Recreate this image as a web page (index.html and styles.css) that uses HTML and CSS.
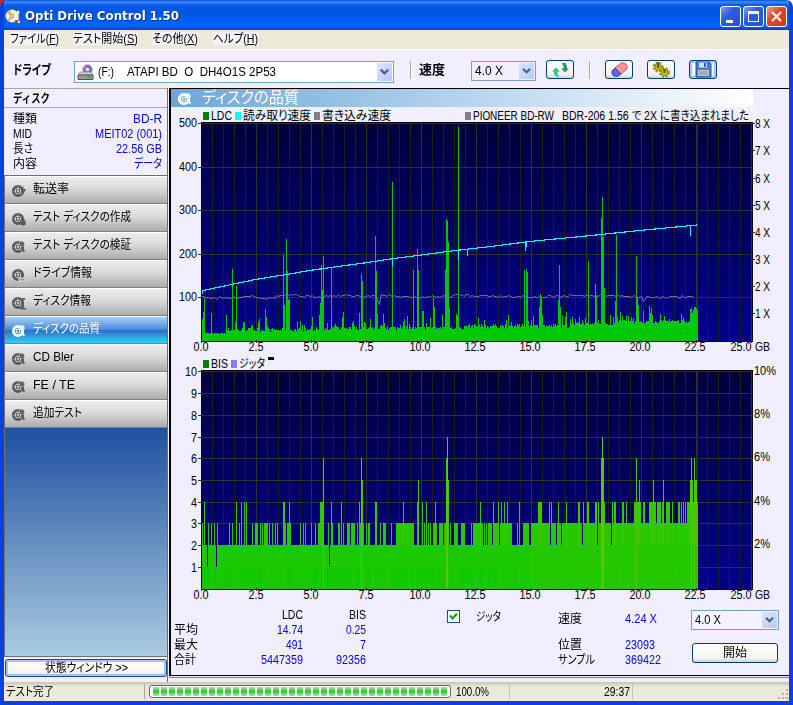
FILE: index.html
```html
<!DOCTYPE html>
<html lang="ja">
<head>
<meta charset="utf-8">
<title>Opti Drive Control 1.50</title>
<link rel="stylesheet" href="styles.css">
</head>
<body>
<svg class="defs" width="0" height="0" aria-hidden="true">
  <defs>
    <symbol id="disc" viewBox="0 0 16 16">
      <circle cx="7" cy="8" r="4.6" fill="none" stroke="currentColor" stroke-width="3"/>
      <circle cx="7" cy="8" r="1.7" fill="none" stroke="currentColor" stroke-width="1.1"/>
      <path d="M2 8h3M7 3v3M9 10l2 2" stroke="#fff" stroke-opacity=".35"/>
    </symbol>
    <symbol id="mag" viewBox="0 0 16 16">
      <use href="#disc"/>
      <circle cx="11" cy="5" r="2.4" fill="currentColor" fill-opacity=".6" stroke="#ddd" stroke-opacity=".8"/>
      <circle cx="11" cy="5" r="2" fill="none" stroke="currentColor"/>
      <path d="M11.500 8.500l1.500 4.500" stroke="currentColor" stroke-width="2"/>
    </symbol>
    <symbol id="chev" viewBox="0 0 16 18"><path d="M4 6.5l4 4 4-4" fill="none" stroke="#4d6185" stroke-width="2.4"/></symbol>
  </defs>
</svg>
<div class="window">
  <header class="titlebar">
    <svg class="app-icon" width="16" height="16" viewBox="0 0 16 16"><circle cx="7" cy="8" r="6.5" fill="#f3ecd0"/><path d="M2 5l5 3-2-6zM2 12l5-4-3 6z" fill="#d8b75c"/><circle cx="7" cy="8" r="2.2" fill="#b8a060"/><circle cx="7" cy="8" r="1" fill="#fff"/><path d="M10 6l3-4 2 3v10h-5z" fill="#fff"/><path d="M13.500 5h1.500v8h-1.500z" fill="#a8452c"/><path d="M10 12h3v3h-3z" fill="#666"/></svg>
    <span class="app-title" data-w="154">Opti Drive Control 1.50</span>
    <div class="win-buttons">
      <span class="wb"><svg width="19" height="19"><path d="M5 13h7v3H5z" fill="#fff"/></svg></span>
      <span class="wb"><svg width="19" height="19"><path d="M4 4h11v11H4zM5 7v7h9V7z" fill="#fff" fill-rule="evenodd"/></svg></span>
      <span class="wb close"><svg width="19" height="19"><path d="M5 5l9 9M14 5l-9 9" stroke="#fff" stroke-width="2.2"/></svg></span>
    </div>
  </header>
  <nav class="menubar">
    <span class="mi mi1"><span data-w="49">ファイル(<u>F</u>)</span></span>
    <span class="mi mi2"><span data-w="65">テスト開始(<u>S</u>)</span></span>
    <span class="mi mi3"><span data-w="46">その他(<u>X</u>)</span></span>
    <span class="mi mi4"><span data-w="45">ヘルプ(<u>H</u>)</span></span>
  </nav>
  <section class="toolbar">
    <div class="tb-label"><b data-w="38">ドライブ</b></div>
    <div class="combo drive">
      <svg width="17" height="17" viewBox="0 0 17 17"><circle cx="10.500" cy="5.500" r="5" fill="#8374ad"/><circle cx="10.500" cy="5.500" r="1.700" fill="#e8e2f6"/><path d="M10 5l-4-3" stroke="#d3c9ec"/><path d="M3 8h11l2 3H1z" fill="#ccc" stroke="#888" stroke-width=".7"/><path d="M1 11h15v4.500H1z" fill="#999" stroke="#555"/><path d="M10 13h4" stroke="#2b4" stroke-width="2"/></svg>
      <span data-w="16">(F:)</span><span class="model" data-w="149">ATAPI BD&nbsp; O&nbsp; DH4O1S 2P53</span>
      <svg class="drop" width="15" height="18"><use href="#chev"/></svg>
    </div>
    <i class="vsep"></i>
    <div class="tb-label speed"><b data-w="26">速度</b></div>
    <div class="combo spd"><span data-w="28">4.0 X</span><svg class="drop" width="15" height="16"><use href="#chev"/></svg></div>
    <span class="tbtn refresh"><svg width="26" height="17"><path d="M5 10.500l4-4 4 4h-2.500V13l2 2.500H9L7 13v-2.500z" fill="#35c282"/><path d="M22 7.500l-4 4-4-4h2.500V5l-2-3h4L20 5v2.500z" fill="#2a9a63"/></svg></span>
    <i class="vsep second"></i>
    <span class="tbtn erase"><svg width="26" height="17"><path d="M9 7l6-5q3-1 5 1t1 5l-6 5z" fill="#ff9292" stroke="#c86464"/><path d="M9 7l6 6q-3 3.500-7 2-3-2-2-5z" fill="#6262f4" stroke="#3b3ba8"/></svg></span>
    <span class="tbtn gears"><svg width="26" height="17"><g fill="none" stroke="#a69b00" stroke-width="2.500" stroke-dasharray="2 1.500"><circle cx="10" cy="6" r="4.300"/><circle cx="16.500" cy="11.500" r="4.300"/></g><g fill="#cbc000" stroke="#8a8000"><circle cx="10" cy="6" r="3.400"/><circle cx="16.500" cy="11.500" r="3.400"/></g><path d="M10 1v6M16.500 8v4" stroke="#555" stroke-width="2"/></svg></span>
    <span class="tbtn save"><svg width="26" height="17"><path d="M6 1h13l2 2v13H6z" fill="#3f7fe0" stroke="#1d4faa"/><path d="M9 1.500h8v5H9z" fill="#d6e4fb"/><path d="M14 2h2v4h-2z" fill="#2a5fbf"/><path d="M8 9h11v6H8z" fill="#c8c8c8"/><path d="M9 11h9M9 13h9" stroke="#888"/></svg></span>
  </section>
  <main class="main">
    <aside class="side">
      <h2 class="side-head"><span data-w="37">ディスク</span></h2>
      <dl class="info">
        <div><dt data-w="24">種類</dt><dd data-w="29">BD-R</dd></div>
        <div><dt data-w="19">MID</dt><dd class="mid" data-w="67">MEIT02 (001)</dd></div>
        <div><dt data-w="20">長さ</dt><dd data-w="46">22.56 GB</dd></div>
        <div><dt data-w="24">内容</dt><dd data-w="28">データ</dd></div>
      </dl>
      <ul class="nav">
        <li><svg width="16" height="16"><use href="#disc"/><path d="M13 2l-3 6h3l-2 6 4-8h-3z" fill="currentColor"/></svg><span data-w="36">転送率</span></li>
        <li><svg width="16" height="16"><use href="#disc"/><path d="M12 6q-5 5-2 8 3 2 5-1 0-3-3-7z" fill="currentColor"/></svg><span data-w="98">テスト ディスクの作成</span></li>
        <li><svg width="16" height="16"><use href="#mag"/></svg><span data-w="98">テスト ディスクの検証</span></li>
        <li><svg width="16" height="16"><use href="#disc"/><path d="M8 11h6v3H8z" fill="#999" stroke="#ddd"/></svg><span data-w="59">ドライブ情報</span></li>
        <li><svg width="16" height="16"><use href="#disc"/><path d="M10 6h3v7h2v1.500H9V13h2V8h-1zM11 3h3v2h-3z" fill="currentColor"/></svg><span data-w="58">ディスク情報</span></li>
        <li class="active"><svg width="16" height="16"><use href="#mag"/></svg><span data-w="67">ディスクの品質</span></li>
        <li><svg width="16" height="16"><use href="#mag"/></svg><span data-w="41">CD Bler</span></li>
        <li><svg width="16" height="16"><use href="#mag"/></svg><span data-w="42">FE / TE</span></li>
        <li><svg width="16" height="16"><use href="#mag"/></svg><span data-w="49">追加テスト</span></li>
      </ul>
      <div class="fill"></div>
      <div class="state-wrap"><button class="state-btn"><span data-w="83">状態ウィンドウ &gt;&gt;</span></button></div>
    </aside>
    <article class="panel">
      <h1 class="panel-head"><svg width="16" height="16"><use href="#mag"/></svg><span data-w="97">ディスクの品質</span></h1>
      <svg class="chart" id="ldc" width="618" height="249" viewBox="170 107 618 249"></svg>
      <svg class="chart" id="bis" width="618" height="247" viewBox="170 356 618 247"></svg>
      <section class="stats">
        <div class="totals">
          <span></span><span class="h" data-w="21">LDC</span><span class="h" data-w="17">BIS</span>
          <span data-w="24">平均</span><span class="v" data-w="26">14.74</span><span class="v" data-w="20">0.25</span>
          <span data-w="24">最大</span><span class="v" data-w="17">491</span><span class="v" data-w="6">7</span>
          <span data-w="22">合計</span><span class="v" data-w="42">5447359</span><span class="v" data-w="30">92356</span>
        </div>
        <div class="jitter"><span class="check"><svg width="11" height="11"><path d="M2 4.500l2.500 3 4.500-5" fill="none" stroke="#21a121" stroke-width="2.200"/></svg></span><span data-w="25">ジッタ</span></div>
        <div class="live">
          <span data-w="24">速度</span><span class="v" data-w="32">4.24 X</span>
          <span data-w="24">位置</span><span class="v" data-w="30">23093</span>
          <span data-w="37">サンプル</span><span class="v" data-w="36">369422</span>
        </div>
        <div class="actions">
          <div class="combo run"><span data-w="26">4.0 X</span><svg class="drop" width="15" height="16"><use href="#chev"/></svg></div>
          <button class="start"><span data-w="24">開始</span></button>
        </div>
      </section>
    </article>
  </main>
  <footer class="status">
    <div class="s-text"><span data-w="48">テスト完了</span></div>
    <div class="progress"><div class="blocks"></div></div>
    <div class="s-pct"><span data-w="33">100.0%</span></div>
    <div class="s-time"><span data-w="26">29:37</span></div>
    <svg class="grip" width="12" height="12"><path d="M9 1h2v2H9zM5 5h2v2H5zM9 5h2v2H9zM1 9h2v2H1zM5 9h2v2H5zM9 9h2v2H9z" fill="#b8b4a2"/></svg>
  </footer>
</div>
<script src="charts.js"></script>
</body>
</html>
```
FILE: styles.css
```css
* { box-sizing: border-box; }
body {
  margin: 0;
  width: 793px;
  height: 705px;
  overflow: hidden;
  background: linear-gradient(90deg, #c8282c 50%, #fff 50%);
  font: 12px/15px "Liberation Sans", "Noto Sans CJK JP", sans-serif;
  font-feature-settings: "palt";
  color: #000;
}
.defs { position: absolute; }
[data-w] { display: inline-block; white-space: pre; transform-origin: 0 50%; }
h1, h2, ul, dl, dd { margin: 0; padding: 0; font-weight: normal; }
svg { flex: none; display: block; }

.window {
  height: 705px;
  display: flex;
  flex-direction: column;
  background: #f0eeff;
  border: solid #0842dc;
  border-width: 0 4px 4px 4px;
  border-radius: 7px 7px 0 0;
  overflow: hidden;
}
.titlebar {
  height: 30px;
  flex: none;
  margin: 0 -4px;
  padding: 2px 6px 0 5px;
  display: flex;
  align-items: center;
  background: linear-gradient(#0a50d8 0, #3c8cf8 2px, #0a5ae8 5px, #0053e1 12px, #0061f8 22px, #0066ff 26px, #004bd0 29px, #0038b0 30px);
}
.app-title {
  margin-left: 4px;
  font: bold 13px/18px "DejaVu Sans", sans-serif;
  color: #fff;
  text-shadow: 1px 1px #0a2a80;
}
.win-buttons { display: flex; gap: 2px; margin-left: auto; }
.wb {
  width: 21px;
  height: 21px;
  border: 1px solid #fff;
  border-radius: 3px;
  background: linear-gradient(135deg, #7aa0f4, #2c5be0 40%, #2353d0);
}
.wb.close { background: linear-gradient(135deg, #f0a088, #e0492a 40%, #c83a14); }

.menubar {
  height: 20px;
  flex: none;
  display: flex;
  background: #ece9d8;
  border-bottom: 1px solid #fff;
  padding: 2px 0 0 6px;
}
.mi { height: 13px; line-height: 15px; background: #f4f2f8; }
.mi2 { margin-left: 14px; }
.mi3 { margin-left: 14px; }
.mi4 { margin-left: 15px; }

.toolbar { height: 38px; flex: none; display: flex; align-items: flex-start; padding: 9px 0 0 9px; }
.tb-label { width: 61px; padding-top: 3px; font-size: 13px; }
.combo {
  display: flex;
  align-items: center;
  height: 21px;
  border: 1px solid #7f9db9;
  background: #fff;
  padding: 0 1px 0 3px;
}
.drop { margin-left: auto; background: linear-gradient(135deg, #dce6fe, #b4c8f6); border-radius: 1px; }
.combo.drive { width: 320px; height: 22px; margin-top: 2px; padding-left: 2px; }
.drive > svg:first-child { margin-right: 4px; }
.model { margin-left: 13px; }
.vsep { width: 1px; height: 18px; margin: 2px 0 0 16px; background: #aca899; box-shadow: 1px 0 #fff; }
.tb-label.speed { width: 52px; margin-left: 8px; }
.combo.spd { width: 65px; height: 20px; margin-top: 2px; background: #f0eeff; }
.tbtn {
  width: 28px;
  height: 19px;
  margin-top: 1px;
  border: 1px solid #003c74;
  border-radius: 3px;
  background: linear-gradient(#fff, #f2f1ee 80%, #d6d0c5);
}
.refresh { margin-left: 10px; }
.vsep.second { margin-left: 15px; }
.erase { margin-left: 15px; }
.gears, .save { margin-left: 14px; }
.save { background: linear-gradient(90deg, #8db7f2, #fff 14%, #fff 86%, #8db7f2); box-shadow: inset 0 0 0 2px #a8c8f6; }

.main { height: 594px; flex: none; display: flex; }
.side { width: 164px; flex: none; display: flex; flex-direction: column; border-right: 1px solid #716f64; }
.side-head {
  height: 20px;
  border: solid #aca899;
  border-width: 1px 0;
  padding: 3px 0 0 9px;
  font: bold 12px/15px "Liberation Sans", "Noto Sans CJK JP", sans-serif;
}
.info { height: 67px; padding: 4px 5px 0 9px; }
.info > div { display: flex; justify-content: space-between; height: 15px; }
.info dd { color: #00f; }
.nav { list-style: none; border: solid #716f64; border-width: 1px 0 0 1px; }
.nav li {
  height: 28px;
  display: flex;
  align-items: center;
  padding: 0 0 1px 6px;
  border-top: 1px solid #fff;
  border-bottom: 1px solid #808080;
  background: linear-gradient(#ececec, #dadada 45%, #acacac);
}
.nav li > svg { margin: 2px 6px 0 0; color: #5c5c5c; }
.nav li.active { color: #fff; background: linear-gradient(#a8d0f4, #4a8ade 48%, #2c70c8 52%, #30d0f8); }
.nav li.active > svg { color: #f4faff; }
.fill { flex: 1; background: linear-gradient(#2050a0, #aacbe0); border: solid #716f64; border-width: 0 0 1px 1px; }
.state-wrap { height: 25px; padding: 2px 0 0 1px; }
button {
  padding: 0;
  font: inherit;
  color: #000;
  border: 1px solid #003c74;
  border-radius: 3px;
  background: linear-gradient(#fff, #f4f3ee 80%, #d6d0c5);
}
.state-btn { width: 162px; height: 18px; line-height: 15px; border-color: #1b4a90; box-shadow: inset 0 0 0 2px #a4c2f4; }

.panel {
  flex: 1;
  min-width: 0;
  height: 588px;
  margin-left: 1px;
  border: solid #000;
  border-width: 1px 0 1px 2px;
  box-shadow: 0 1px #f0eeff, 0 2px #808080;
  display: flex;
  flex-direction: column;
}
.panel-head {
  width: 582px;
  height: 18px;
  flex: none;
  display: flex;
  align-items: center;
  padding-left: 6px;
  background: linear-gradient(90deg, #6ca6da, #c4dcf0 60%, #fff);
  color: #fff;
  font-size: 16px;
  line-height: 18px;
}
.panel-head svg { margin: 1px 9px 0 0; }
.chart { flex: none; margin-left: -1px; }
.chart text { font-size: 12px; }
.stats { flex: 1; display: flex; align-items: flex-start; padding: 5px 0 0 3px; }
.v { color: #00f; }
.totals { width: 192px; display: grid; grid-template-columns: 40px 89px 63px; grid-auto-rows: 15px; justify-items: end; }
.totals > :nth-child(3n+1) { justify-self: start; }
.jitter { display: flex; width: 192px; padding: 2px 0 0 81px; }
.check { width: 13px; height: 13px; margin-right: 16px; border: 1px solid #1c5180; background: #fff; }
.live { width: 133px; display: grid; grid-template-columns: 67px 1fr; grid-template-rows: 26px 15px 15px; padding-top: 4px; }
.live > * { height: 15px; justify-self: start; }
.actions { width: 88px; padding-top: 2px; }
.combo.run { width: 88px; height: 20px; background: #f4f2ff; }
.start { display: block; width: 86px; height: 20px; margin: 13px 0 0 1px; }

.status {
  height: 19px;
  flex: none;
  display: flex;
  align-items: center;
  background: linear-gradient(#c8c5b4, #ece9d8 5px, #ece9d8);
}
.s-text { width: 141px; height: 15px; padding-left: 2px; border-right: 1px solid #aca899; line-height: 17px; }
.progress { width: 302px; height: 13px; margin-left: 4px; padding: 1px 2px; border: 1px solid #686868; border-radius: 3px; background: #fff; }
.blocks { width: 296px; height: 9px; background: repeating-linear-gradient(90deg, #fff 0 1px, #28c828 1px 7px, #fff 7px 8px); -webkit-mask: linear-gradient(#0006, #000 50%, #0006); }
.s-pct { width: 59px; height: 15px; padding-left: 5px; border-right: 1px solid #c8c4b4; line-height: 17px; }
.s-time { width: 123px; height: 15px; padding-right: 2px; text-align: right; border-right: 1px solid #c8c4b4; line-height: 17px; }
.grip { margin: 5px 0 0 auto; }
```
FILE: charts.js
```js
// Squeeze each label to the width of its dialog cell.
document.querySelectorAll('[data-w]').forEach(el => {
  const w = +el.dataset.w, n = el.getBoundingClientRect().width;
  el.style.transform = 'scaleX(' + w / n + ')';
  el.style.marginRight = (w - n) + 'px';
});

const r = (x, y, w, h, f) => `<rect x="${x}" y="${y}" width="${w}" height="${h}" fill="${f}"/>`;
const t = (x, y, w, s) => `<text x="${x}" y="${y}" textLength="${w}" lengthAdjust="spacingAndGlyphs">${s}</text>`;
let seed = 7;
const rnd = () => (seed = (seed * 16807) % 2147483647) / 2147483647;

function frame(top, h, rows, id) {
  let s = `<defs><linearGradient id="${id}" x2="0" y2="1"><stop stop-color="#00003c"/><stop offset="1" stop-color="#00008c"/></linearGradient></defs>`;
  s += r(201, top - 1, 552, h + 2, '#000') + r(202, top, 549, h, `url(#${id})`);
  for (let k = 1; k <= 50; k++) s += r(201 + 11 * k, top, 1, h, k % 5 ? '#1c1c1c' : '#303030');
  rows.forEach(y => { s += r(202, y, 550, 1, '#303030') + r(198, y, 3, 1, '#303030'); });
  return s + r(697, top, 1, h, '#580050');
}
function xAxis(y) {
  let s = '';
  for (let k = 0; k <= 10; k++) {
    const v = (k * 2.5).toFixed(1), w = k < 4 ? 15 : 21;
    s += r(201 + 55 * k, y - 11, 1, 3, '#303030') + t(k < 4 ? 193.5 + 55 * k : 189.5 + 55 * k - (k === 10 ? 9 : 0), y, w, v);
  }
  return s + t(755, y, 15, 'GB');
}

// LDC chart
const a = [[112,703],[115,680],[118,640],[139,685],[184,690],[202,552],[211,710],[214,603],[283,703],[301,673],[304,695],[355,510],[358,660],[364,462],[367,558],[370,645],[373,642],[397,710],[442,697],[463,690],[466,655],[469,540],[472,615],[475,513],[487,715],[499,548],[532,695],[535,682],[583,683],[589,567],[592,587],[598,710],[631,453],[634,558],[637,687],[655,687],[682,290],[727,692],[745,555],[757,492],[760,555],[772,678],[775,678],[796,700],[805,640],[808,665],[832,690],[841,555],[844,402],[847,407],[850,470],[853,670],[874,687],[877,692],[880,126]];
const b = [[55,640],[145,630],[154,650],[193,495],[199,492],[202,500],[205,648],[238,605],[241,567],[244,578],[247,630],[295,585],[298,480],[301,605],[319,622],[358,635],[376,640],[385,468],[406,537],[409,570],[415,645],[424,340],[427,277],[430,396],[433,548],[451,630],[466,588],[469,390],[472,640],[481,622],[505,632],[529,453],[532,575],[535,600],[568,603],[571,625],[574,608],[577,630],[664,628],[670,635],[691,612],[694,610],[697,625],[700,615],[703,605],[706,605],[709,610],[712,635]];
const A = p => [165 + p[0] / 3, 85 + p[1] / 3], B = p => [460 + p[0] / 3, 105 + p[1] / 3];
const peaks = {};
a.map(A).concat(b.map(B)).forEach(([x, y]) => { peaks[Math.floor(x)] = Math.round(y); });
let bars = '';
for (let x = 202; x < 698; x++) {
  const base = x < 226 ? 333.5 : x < 332 ? 331 : x < 465 ? 329 : x < 570 ? 327 : x < 615 ? 324.500 : x < 690 ? 322.500 : 318;
  let y = base + 1 - rnd() * (x < 226 ? 2 : 4);
  if (rnd() < (x < 226 ? 0 : .09)) y -= 3 + rnd() * 6;
  y = Math.round(y);
  if (peaks[x]) y = Math.min(y, peaks[x]);
  bars += `M${x} ${y}h1V341h-1z`;
}
const line = p => p.map(q => q.map(n => n.toFixed(1)).join(' ')).join('L');
const read = [[112,617],[202,598],[274,583],[355,570],[438,556],[514,545],[604,533],[682,521],[769,510],[882,495]].map(A)
  .concat([[0,435],[80,426],[214,409],[379,393],[544,376],[712,360]].map(B));
const wr = [[112,634],[142,638],[200,638],[262,631],[305,640],[358,629],[430,633],[520,630],[634,632],[643,657],[649,628],[700,634],[760,635],[860,633],[882,628]].map(A)
  .concat([[0,568],[80,571],[200,574],[300,574],[350,570],[480,571],[545,575],[550,588],[560,574],[708,575]].map(B));
let gray = [];
for (let i = 0; i + 1 < wr.length; i++) {
  const [p, q] = [wr[i], wr[i + 1]], n = Math.max(1, Math.round((q[0] - p[0]) / 2));
  for (let j = 0; j < n; j++) gray.push([p[0] + (q[0] - p[0]) * j / n, Math.round(p[1] + (q[1] - p[1]) * j / n + rnd() * 2.400 - 1.200) + .5]);
}
let s = frame(123, 218, [123, 167, 210, 254, 297], 'g1');
s += `<g shape-rendering="crispEdges"><path d="${bars}" fill="#00c800"/></g>`;
s += `<path d="M${line(gray)}" fill="none" stroke="#7c7c7c"/>`;
s += `<path shape-rendering="crispEdges" d="M${line(read)}M202.500 291v3M392.500 259v7M458.500 251v9M467.500 249v7M525.500 243v8M526.500 242v5M690.500 225v11" fill="none" stroke="#00ffff" stroke-width="1.150"/>`;
[500, 400, 300, 200, 100].forEach((v, i) => { s += t(179, [127, 171, 214, 258, 301][i], 18, v); });
for (let v = 1; v <= 8; v++) { const y = Math.round(340.400 - 27.150 * v); s += r(752, y, 3, 1, '#303030') + t(755, y + 5, 15, v + ' X'); }
s += xAxis(351);
s += r(203, 112, 6, 8, '#008000') + t(211, 120, 21, 'LDC') + r(235, 112, 6, 8, '#00ffff') + t(243, 120, 68, '読み取り速度')
  + r(314, 112, 6, 8, '#808080') + t(322, 120, 69, '書き込み速度') + r(465, 112, 6, 8, '#808080')
  + t(473, 120, 81, 'PIONEER BD-RW') + t(562, 120, 187, 'BDR-206 1.56 で 2X に書き込まれました');
document.getElementById('ldc').innerHTML = s;

// BIS chart: error level per column
const lv = {};
for (let x = 202; x < 698; x++) lv[x] = 2;
const put = (o, l, list) => list.split(',').forEach(e => {
  const [p, q = p] = e.split('-').map(Number);
  for (let x = Math.floor(o + p / 3); x <= Math.floor(o + q / 3); x++) if (x > 201 && x < 698) lv[x] = l;
});
put(165, 3, '112,130,139,148,157,193,202,223,262,271-278,286,292,298-308,313,322,331,337,361,367-377,406,415,421,439,451,460-465,490,502,520-524,535,547-553,559-569,577,584-596,605,611-614,646,655-661,679,694-711,717-730,733-746,778,790,796,805-814,823-832,838-842,856,868-878,889,895');
put(165, 4, '118,214,229,238,244,355-358,373,466-474,499,529,583,631-634,715,757,772,784,811');
put(165, 5, '592,760,850'); put(165, 6, '475,589,844'); put(165, 7, '847');
put(165, 1, '127,154,493');
put(460, 3, '4-8,13,34,40-66,73,79,85,88-94,100-116,121-154,172,178,190-206,214-712');
put(460, 2, '271,290,304,367,412,454');
put(460, 4, '61,100,115,124,133,142,178,235-244,268,274,295,319,355-359,370,382-386,406-410,415,424-434,457,463-466,487-490,499,523-541,550-554,568-585,592-602,608,619-628,637,655-658,664,670,676,682-712');
put(460, 5, '538,580,610,691-697,703-710'); put(460, 6, '424-431,529,694,703'); put(460, 7, '427');
const ys = [589, 567, 545, 523, 502, 480, 458, 437];
const col = ['', '#10c800', '#1cc800', '#28c800', '#34c800', '#40c800', '#50c800', '#5cc800'];
s = frame(371, 218, [371, 393, 415, 437, 458, 480, 502, 523, 545, 567], 'g2') + '<g shape-rendering="crispEdges">';
for (let x = 202; x < 698; x++) {
  const l = lv[x], y = ys[l];
  s += r(x, y, 1, 589 - y, col[l]);
  if (l > 2 && l < 6) s += r(x, 545, 1, 44, x > 530 ? '#24c800' : '#1cc800');
  if (rnd() < (x < 530 ? .5 : .1) && l < 5) s += r(x, 567, 1, 22, x < 530 ? '#12c804' : '#1cc800');
}
s += '</g>';
for (let v = 1; v <= 10; v++) {
  const y = (ys[v] || [415, 393, 371][v - 8]) + 5;
  s += v === 10 ? t(185, y, 12, v) : t(191, y, 6, v);
  if (v % 2 === 0) s += t(754, Math.round(589 - 21.600 * v) + 2, v === 10 ? 22 : 16, v + '%');
}
s += xAxis(599);
s += r(203, 360, 6, 8, '#008000') + t(211, 368, 17, 'BIS') + r(231, 360, 6, 8, '#8080ff') + t(239, 368, 26, 'ジッタ') + r(268, 357, 6, 3, '#000');
document.getElementById('bis').innerHTML = s;
```
